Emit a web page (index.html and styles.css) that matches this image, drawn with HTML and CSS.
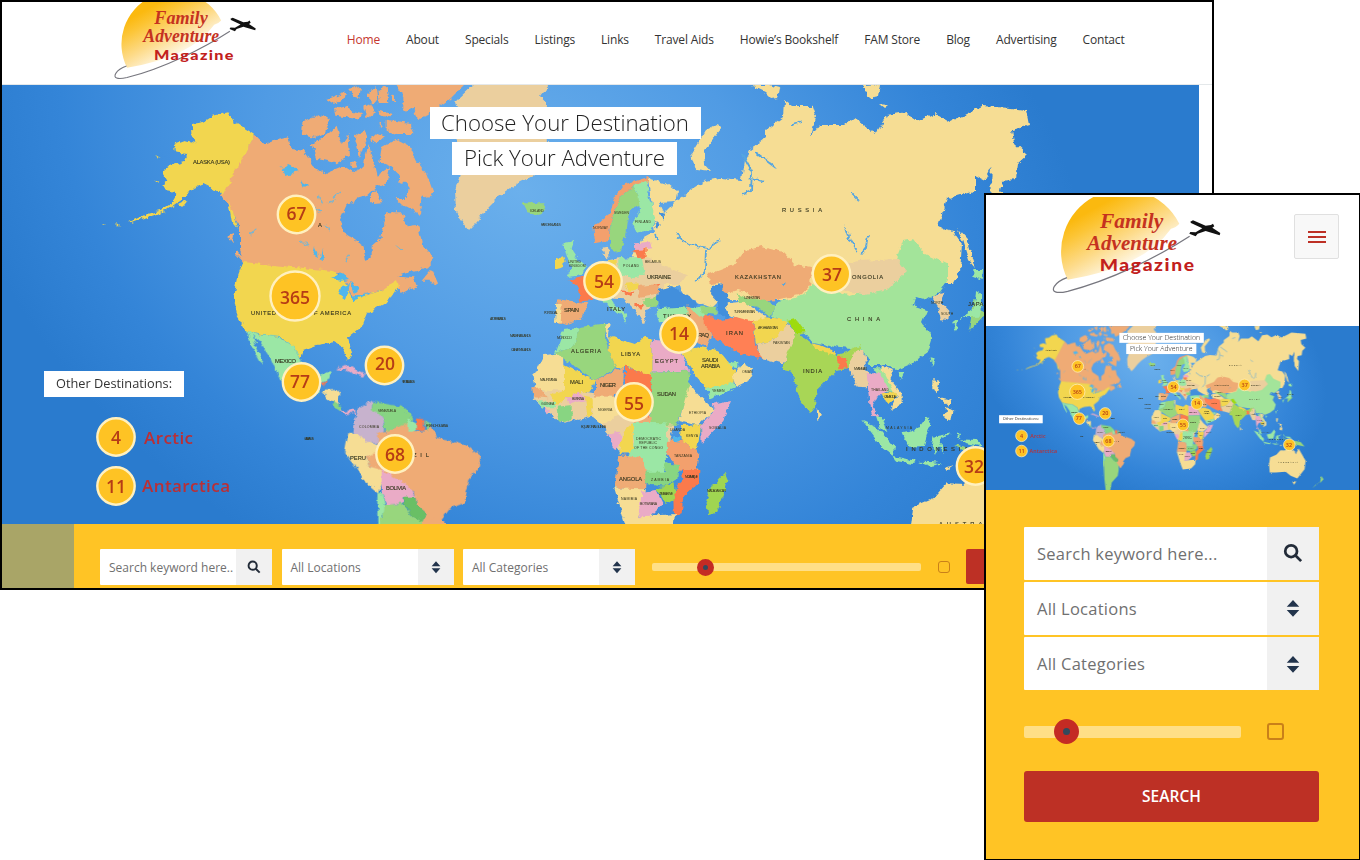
FILE: index.html
```html
<!DOCTYPE html>
<html lang="en">
<head>
<meta charset="utf-8">
<title>Family Adventure Magazine</title>
<link rel="stylesheet" href="styles.css">
</head>
<body>
<main class="stage">
<section class="desktop">
  <header class="top">
    <svg class="logo" viewBox="200 20 510 295">
      <defs>
        <linearGradient id="sunfill" gradientUnits="userSpaceOnUse" x1="320" y1="60" x2="425" y2="250">
          <stop offset="0" stop-color="#fbb90f"/><stop offset=".2" stop-color="#fcc536"/><stop offset=".55" stop-color="#fddb8a"/><stop offset=".85" stop-color="#fef3d8"/><stop offset="1" stop-color="#fff"/>
        </linearGradient>
      </defs>
      <g id="brand">
        <path d="M250 268A187 187 0 0 1 585 100Q575 112 560 115Q480 230 250 268Z" fill="url(#sunfill)"/>
        <path d="M616 138C520 200 380 270 250 303C215 311 200 305 210 288Q220 272 248 262" class="orbit"/>
        <path d="M618 94L626 90 664 106 680 104 686 100 690 108 684 112 708 128 706 135 664 122 640 130 634 138 615 130 618 125 634 126 654 114 620 98Z" fill="#111"/>
        <text class="script" x="347" y="112" textLength="190" lengthAdjust="spacingAndGlyphs">Family</text>
        <text class="script" x="308" y="178" textLength="270" lengthAdjust="spacingAndGlyphs">Adventure</text>
        <text class="block" x="346" y="241" textLength="288" lengthAdjust="spacingAndGlyphs">Magazine</text>
      </g>
    </svg>
    <nav class="nav"><a class="on">Home</a><a>About</a><a>Specials</a><a>Listings</a><a>Links</a><a>Travel Aids</a><a>Howie’s Bookshelf</a><a>FAM Store</a><a>Blog</a><a>Advertising</a><a>Contact</a></nav>
  </header>
  <svg class="map" viewBox="2 85 1197 439" preserveAspectRatio="none">
    <defs>
      <radialGradient id="sea" gradientUnits="userSpaceOnUse" cx="0" cy="0" r="1" gradientTransform="translate(520 190) rotate(25) scale(600 430)">
        <stop offset="0" stop-color="#6bb0ec"/><stop offset=".45" stop-color="#509be4"/><stop offset=".8" stop-color="#3485d8"/><stop offset="1" stop-color="#2a7bce"/>
      </radialGradient>
      <filter id="coast" filterUnits="userSpaceOnUse" x="0" y="80" width="1202" height="540">
        <feTurbulence type="fractalNoise" baseFrequency=".16" numOctaves="3" seed="4" result="n"/>
        <feDisplacementMap in="SourceGraphic" in2="n" scale="6" xChannelSelector="R" yChannelSelector="G"/>
      </filter>
    </defs>
    <g id="world">
      <rect x="0" y="84" width="1200" height="530" fill="url(#sea)"/>
      <g filter="url(#coast)">
        <g class="tan"><path d="M478 80L455 102 462 125 455 150 460 175 455 190 456 212 469 230 477 222 488 208 500 196 520 182 535 175 548 160 546 130 548 105 540 96 552 80Z"/></g>
        <g transform="translate(220 84) scale(.33333)" class="peach">
          <path d="M105 152L135 182 170 168 205 160 215 195 250 200 280 245 310 270 370 245 400 265 430 250 445 180 458 225 470 275 510 250 500 295 465 310 440 335 410 345 380 365 360 410 370 445 430 485 438 530 455 525 455 485 485 460 490 420 500 385 545 385 560 430 595 425 605 475 640 520 625 550 580 560 535 575 580 580 590 605 545 630 530 600 480 620 400 650 370 570 75 540 60 500 60 430 30 370 0 335Z"/>
          <path d="M245 150L250 115 300 90 330 110 318 145 282 162Z"/>
          <path d="M275 182L335 140 350 125 365 180 385 150 390 215 350 238 290 225Z"/>
          <path d="M322 45L370 25 385 30 345 60ZM345 75L385 65 400 85 430 90 410 105 350 95ZM385 15L420 5 415 45 400 35ZM445 20L470 10 475 45 450 60ZM430 70L450 60 465 85 440 100ZM475 20L500 5 505 60 480 60ZM510 40L525 35 525 55ZM405 160L430 140 440 160 420 220ZM450 165L470 145 495 155 470 180ZM475 80L520 90 515 100 480 95ZM390 235L410 232 415 250 395 252ZM478 110L488 125 480 132Z"/>
          <path d="M545 0L735 0 690 45 620 95 590 105 580 75 550 80 550 40 525 0ZM500 110L570 120 580 150 530 150 500 140Z"/>
          <path d="M478 235L485 190 530 165 570 185 590 230 620 270 640 325 625 345 605 330 600 392 555 370 525 345 560 345 570 310 545 280 515 250ZM450 340L465 315 487 355 450 358ZM605 590L635 555 655 600 625 590ZM540 270L555 280 550 300 535 295Z"/>
          <path d="M25 455L40 450 35 475ZM45 500L85 530 78 545 45 510Z"/>
        </g>
        <g transform="translate(0 84) scale(.33333)" class="yellow">
          <path d="M765 152L700 110 685 85 640 95 610 115 575 120 578 160 590 178 555 168 522 180 525 205 562 210 550 235 510 245 487 265 502 290 487 300 500 322 532 328 515 358 480 380 435 392 388 414 392 418 440 400 500 380 550 345 575 315 610 300 640 315 668 332Z"/>
          <path d="M465 212L482 222 472 220ZM462 290L475 292 468 296ZM535 362L560 350 545 368ZM350 418L358 424 345 424ZM300 420L318 422 310 425ZM685 350L705 400 715 435 695 410Z"/>
        </g>
        <path class="yellow" d="M243 262L237 278 233 298 236 314 246 331 262 335 280 337 295 347 300 360 303 350 317 345 335 342 343 347 348 360 352 354 348 337 363 325 368 313 387 302 399 286 397 280 380 291 352 300 345 280 333 271Z"/>
        <path class="lake" d="M332 278L343 273 350 279 340 281ZM342 286L350 284 345 300 339 296ZM350 282L360 288 354 294ZM352 301L366 296 366 294 351 298ZM364 293L372 292 368 295ZM281 168L292 165 298 172 286 176ZM315 245L318 258 313 255ZM322 248L324 260 320 258ZM300 180L308 184 304 188Z"/>
        <path class="wet" d="M325 225L330 230M342 190L332 198M310 205L320 212M300 240L308 246M350 255L345 262M396 245L402 250M250 235L256 228M328 203L336 200M318 195L322 205"/>
        <g transform="translate(220 300) scale(.33333)">
          <path class="mint" d="M80 92L120 105 175 110 225 140 240 180 245 210 300 225 332 212 328 238 305 250 290 290 180 240 165 205 150 170 120 125 98 108 112 145 133 195 118 182 95 140Z"/>
          <path class="cream" d="M305 272L358 270 355 315 330 305Z"/><path class="orange" d="M305 250L320 245 315 262Z"/>
          <path class="green" d="M335 305L360 318 365 335 345 322Z"/>
          <path class="pink" d="M355 325L380 335 402 325 410 345 398 335 375 345ZM348 208L375 195 437 222 432 230 405 222 380 210Z"/>
          <path class="lilac" d="M405 355L415 325 460 300 455 325 490 350 495 390 470 430 440 430 400 400Z"/>
          <path class="green" d="M458 305L490 310 545 320 580 355 570 375 520 385 500 405 490 350 455 330Z"/>
          <path class="peach" d="M475 400L520 385 565 370 570 395 620 390 635 375 650 415 700 425 745 440 782 470 775 505 745 540 730 610 690 625 665 660 665 690 600 690 620 640 590 615 585 580 485 515 450 500 440 470 470 450Z"/>
          <path class="mint" d="M565 355L590 370 588 395 565 395Z"/><path class="orange" d="M588 355L612 358 612 390 588 388Z"/><path class="green" d="M612 360L634 372 620 392Z"/>
          <path class="cream" d="M385 402L420 405 440 425 470 435 470 455 440 470 450 500 485 510 485 550 478 578 430 540 400 490 375 455Z"/>
          <path class="pink" d="M485 510L550 545 590 590 550 590 545 612 500 615 485 580Z"/>
          <path class="grass" d="M490 615L545 612 580 650 615 665 600 710 490 710Z"/>
          <path class="green2" d="M550 590L585 590 590 615 620 640 610 665 580 650 548 610Z"/>
          <path class="mint" d="M475 575L485 580 495 612 480 710 475 700Z"/>
        </g>
        <g transform="translate(-2 64) scale(1.067)">
          <path class="grass" d="M358 425L360 480 365 525 375 525 382 490 400 470 403 452 402 430Z"/><path class="peach" d="M397 430L408 425 420 430 408 448Z"/>
          <path class="cream" d="M855 432L870 415 890 403 912 388 925 393 935 405 944 388 965 425 962 450 940 478 920 470 905 458 875 460 857 460ZM925 487L937 487 930 497ZM930 110L945 125 943 155 932 140Z"/>
          <path class="grass" d="M895 357L950 368 962 382 930 375ZM1012 470L1019 480 1008 492ZM1005 490L985 508 995 497ZM915 220L925 235 910 250Z"/>
        </g>
        <path class="cream" d="M648 178L667 184 677 192 675 202 659 203 664 213 677 200 693 189 705 181 720 178 742 180 745 160 750 150 765 138 765 130 783 117 784 100 792 106 812 106 816 118 811 136 820 125 845 125 855 118 876 134 888 115 905 112 918 121 935 113 950 122 970 112 982 106 1010 108 1027 110 1030 125 1012 130 1014 143 1027 155 1017 164 1015 179 1002 181 998 200 990 200 992 167 985 181 975 176 975 191 947 199 938 227 953 231 962 244 960 271 953 284 945 284 850 300 720 300 712 308 700 303 683 295 680 285 640 300 610 290 630 262 640 240 655 232Z"/>
        <path class="cream" d="M696 170L691 155 706 130 718 124 721 129 704 150 705 165 711 172ZM750 85L768 85 780 88 778 98 772 99 765 92ZM863 86L880 85 878 96 868 98ZM879 104L888 105 884 108ZM958 229L966 238 972 258 975 268 968 260 962 240Z"/>
        <g transform="translate(500 160) scale(.33333)">
          <path class="tan" d="M325 300L355 295 430 290 560 345 540 375 490 370 485 400 440 455 430 492 405 450 370 415 300 410 300 330Z"/>
          <path class="grass" d="M70 130L130 130 138 150 110 165 85 160Z"/>
          <path class="salmon" d="M447 50L370 75 345 110 330 160 280 200 285 247 325 240 332 190 360 110 400 78 447 66Z"/>
          <path class="grass" d="M360 110L400 78 418 110 420 135 390 150 380 190 375 230 358 275 340 280 328 235 332 190Z"/>
          <path class="mint" d="M400 78L445 60 442 100 465 170 455 210 410 218 397 190 420 150 415 105Z"/>
          <path class="pink" d="M405 250L450 245 460 265 405 272Z"/><path class="orange" d="M403 270L440 268 440 290 415 297Z"/>
          <path class="mint" d="M190 250L220 243 215 270 235 300 258 320 245 345 200 352 215 325 200 290Z"/>
          <path class="yellow" d="M165 300L190 288 195 320 165 328ZM325 300L350 300 350 345 325 345ZM370 375L415 370 420 385 385 390Z"/>
          <path class="tan" d="M305 265L325 260 325 295 310 290Z"/>
          <path class="mint" d="M355 295L425 290 435 345 400 352 355 340Z"/>
          <path class="orange" d="M205 360L250 350 310 380 275 420 237 425 235 385ZM360 390L400 395 390 412ZM405 432L435 432 420 450ZM455 365L482 370 470 390Z"/>
          <path class="peach" d="M172 418L265 430 240 480 200 495 172 485ZM415 378L470 372 480 400 420 410Z"/><path class="cream" d="M168 435L185 435 182 487 165 485Z"/>
          <path class="mint" d="M295 405L330 412 345 435 382 468 375 488 362 465 315 430ZM470 448L530 435 615 445 610 480 480 490Z"/>
          <path class="grass" d="M430 415L475 412 470 440 435 440ZM600 440L650 440 650 465 605 460Z"/>
          <path class="tan" d="M430 345L470 320 560 345 540 372 480 372 430 365Z"/>
        </g>
        <path class="seafill" d="M658 290L672 286 678 291 684 294 698 304 695 308 676 307 660 308 657 300ZM712 286L722 284 728 296 730 314 727 320 718 312 718 302 711 294ZM660 212L665 214 664 220ZM655 222L660 224 658 229Z"/>
        <path class="peach" d="M707 275L733 265 745 250 762 247 783 252 795 265 812 268 810 285 803 294 775 300 766 302 745 292 738 290 726 294 720 283 710 284Z"/>
        <g transform="translate(700 290) scale(.33333)">
          <path class="grass" d="M110 10L140 25 200 30 230 50 210 80 170 50 120 40Z"/>
          <path class="cream" d="M80 40L130 35 200 80 165 105 105 80 85 75Z"/>
          <path class="peach" d="M-40 45L15 90 35 140 20 170 -30 150Z"/>
          <path class="iran" d="M10 72L60 92 105 80 160 95 165 165 187 205 130 195 80 170 45 145 12 110Z"/>
          <path class="yellow" d="M160 95L195 82 265 88 250 130 220 150 168 165Z"/>
          <path class="tan" d="M168 165L220 150 265 100 290 130 265 190 250 222 200 208 185 205Z"/>
        </g>
        <path class="mint2" d="M772 316L778 302 805 295 812 283 850 296 870 290 890 275 903 241 913 239 925 254 947 264 947 281 940 291 927 300 917 297 912 305 927 310 922 322 932 337 927 353 913 363 897 370 887 365 870 365 863 350 840 348 813 343 800 327Z"/>
        <path class="tan" d="M845 264L858 261 897 259 907 271 887 290 866 295 843 290 835 275Z"/>
        <g transform="translate(700 290) scale(.33333)">
          <path class="india" d="M265 95L290 85 318 130 300 135 345 170 410 195 440 185 480 165 470 200 440 235 410 240 350 300 345 350 330 370 300 330 275 245 248 240 262 190 290 130Z"/>
          <path class="lime" d="M262 90L285 84 318 125 290 130Z"/><path class="yellow" d="M335 160L360 165 408 185 405 195 345 178Z"/><path class="orange" d="M410 200L438 200 440 235 415 235Z"/><path class="cream" d="M350 352L368 378 352 390Z"/>
          <path class="tan" d="M470 180L492 180 500 240 515 250 500 292 470 290 443 230ZM700 15L735 8 722 35 748 62 745 90 722 88 715 50 700 30Z"/>
          <path class="mint2" d="M520 235L545 235 575 275 590 305 565 305Z"/>
          <path class="pink" d="M500 250L540 250 568 300 528 322 515 350 540 385 520 375 508 340Z"/>
          <path class="cream" d="M540 225L582 240 568 265 605 310 605 340 572 360 590 318 565 275Z"/><path class="yellow" d="M545 310L588 305 580 335 555 335Z"/>
          <path class="mint" d="M528 378L550 388 562 428 540 415ZM484 390L530 410 582 470 578 498 540 465ZM578 498L645 512 640 522 585 512ZM655 515L690 516 730 520 690 528ZM608 430L650 420 680 380 692 395 680 440 672 468 625 470ZM700 440L752 430 718 450 735 490 715 470 705 495 695 470ZM770 430L780 435 775 450ZM780 448L830 450 850 470 800 460ZM692 202L704 205 696 232ZM595 245L612 250 602 270Z"/>
          <path class="cream" d="M700 270L718 275 710 310 700 300ZM740 355L760 365 755 390 730 380ZM715 320L755 330 745 350ZM735 535L765 525 740 543ZM632 715L640 650 700 625 740 580 880 585 900 715Z"/>
          <path class="mint" d="M828 0L842 8 848 45 838 80 790 82 775 90 768 125 760 100 800 70 825 50ZM820 -60L852 -60 848 -30 820 -40Z"/>
        </g>
        <g transform="translate(500 320) scale(.33333)">
          <path class="tan" d="M100 210L195 205 345 230 450 290 520 315 500 400 360 400 325 340 300 308 280 290 180 310 120 255 98 235Z"/>
          <path class="yellow" d="M540 95L600 80 660 95 705 150 700 190 620 208 590 170Z"/>
          <path class="mint" d="M618 207L700 187 706 205 630 235ZM680 130L715 125 715 142 690 138Z"/><path class="cream" d="M698 165L730 128 762 148 745 180 706 200Z"/>
          <path class="mint" d="M165 100L190 30 235 25 228 70 205 85Z"/>
          <path class="cream" d="M98 172L130 105 192 100 195 212 105 208ZM310 10L332 10 325 60Z"/>
          <path class="grass" d="M205 85L228 68 235 22 320 10 315 50 325 90 350 145 285 180 165 100Z"/>
          <path class="yellow" d="M328 48L405 72 430 50 455 60 455 168 380 140 350 145 325 90ZM192 135L285 180 275 210 210 230 170 258 150 225 192 212ZM255 230L280 235 275 290 262 290Z"/>
          <path class="pink" d="M455 62L530 68 540 95 568 152 455 155ZM200 235L235 215 260 240 210 250ZM130 265L150 270 145 285Z"/>
          <path class="peach" d="M285 180L372 140 370 190 345 230 285 230ZM97 205L125 202 145 235 100 232ZM385 290L450 285 472 308 400 310Z"/>
          <path class="mint" d="M110 240L170 245 165 262 125 262Z"/><path class="green" d="M170 260L215 255 215 300 175 308Z"/>
          <path class="orange" d="M375 140L455 165 450 290 375 290Z"/>
          <path class="grass" d="M453 155L566 153 570 200 530 318 455 312Z"/>
          <path class="cream" d="M568 190L600 230 645 270 592 315 538 300ZM278 230L345 230 360 285 305 312 280 292Z"/>
          <path class="pink" d="M635 255L693 243 670 300 605 372 603 318 645 270ZM322 342L355 335 370 365 345 388Z"/>
          <path class="yellow" d="M543 315L605 313 590 392 545 360ZM372 335L397 312 400 400 355 400Z"/>
          <path class="mint" d="M395 308L500 310 502 380 500 430 490 458 435 455 430 420 385 410 402 370Z"/>
          <path class="salmon" d="M500 362L550 362 598 400 592 450 535 452 502 400Z"/><path class="lake" d="M520 348L543 350 538 368 522 365Z"/>
          <path class="peach" d="M358 405L430 415 440 455 435 510 343 505Z"/>
          <path class="green" d="M437 455L495 455 492 430 540 435 535 475 490 500 435 492Z"/>
          <path class="orange" d="M545 450L598 450 597 488 550 530 545 580 522 588 520 540 530 500 550 480Z"/>
          <path class="lime2" d="M472 508L520 488 528 535 500 552Z"/>
          <path class="cream" d="M343 505L438 508 415 590 525 582 520 625 480 665 400 675 375 610Z"/>
          <path class="pink" d="M425 515L470 510 490 552 450 590 415 592Z"/>
          <path class="lime2" d="M675 458L685 482 652 575 625 582 617 550 628 510Z"/>
        </g>
        <path class="waterline" d="M742 154L752 172 751 190 742 194M753 178L764 182M754 152L768 162 776 168M792 125L802 122M868 235L866 248 861 254M845 225L850 240 858 252M676 235L690 245 708 248 720 240M706 250L705 270 696 282M655 235L657 240M783 285L786 282M852 194L858 200"/>
      </g>
      <g class="places">
        <text x="193" y="164" textLength="37">ALASKA (USA)</text><text x="318" y="227">A</text>
        <text x="251" y="315" textLength="25">UNITED</text><text x="314" y="315" textLength="37">F AMERICA</text>
        <text x="275" y="363" textLength="21">MEXICO</text>
        <text x="359" y="428" class="xs" textLength="20">COLOMBIA</text><text x="378" y="412" class="xs" textLength="18">VENEZUELA</text>
        <text x="350" y="460" textLength="16">PERU</text><text x="413" y="457" textLength="16">Z I L</text><text x="386" y="490" textLength="20">BOLIVIA</text>
        <text x="530" y="212" class="xs" textLength="14">ICELAND</text><text x="614" y="214" class="xs" textLength="15">SWEDEN</text><text x="635" y="223" class="xs" textLength="16">FINLAND</text><text x="593" y="229" class="xs" textLength="15">NORWAY</text>
        <text x="623" y="267" class="xs" textLength="16">POLAND</text><text x="645" y="263" class="xs" textLength="16">BELARUS</text><text x="647" y="279" textLength="24">UKRAINE</text>
        <text x="568" y="263" class="xs">UNITED</text><text x="569" y="267" class="xs">KINGDOM</text><text x="564" y="312" textLength="15">SPAIN</text><text x="607" y="311" textLength="18">ITALY</text><text x="663" y="318" textLength="28">TURKEY</text>
        <text x="782" y="212" textLength="40">RUSSIA</text><text x="735" y="279" textLength="46">KAZAKHSTAN</text><text x="852" y="279" textLength="31">ONGOLIA</text><text x="847" y="321" textLength="33">CHINA</text>
        <text x="571" y="353" textLength="30">ALGERIA</text><text x="621" y="356" textLength="19">LIBYA</text><text x="655" y="363" textLength="23">EGYPT</text><text x="570" y="384" textLength="13">MALI</text><text x="600" y="387" textLength="16">NIGER</text><text x="657" y="396" textLength="19">SUDAN</text>
        <text x="540" y="381" class="xs" textLength="17">MAURITANIA</text><text x="557" y="339" class="xs" textLength="15">MOROCCO</text><text x="541" y="405" class="xs">GUINEA</text><text x="572" y="400" class="xs" textLength="12">BURKINA</text><text x="598" y="411" class="xs">NIGERIA</text>
        <text x="689" y="414" class="xs" textLength="17">ETHIOPIA</text><text x="709" y="429" class="xs" textLength="17">SOMALIA</text><text x="686" y="437" class="xs" textLength="12">KENYA</text><text x="674" y="457" class="xs" textLength="18">TANZANIA</text><text x="670" y="431" class="xs">UGANDA</text>
        <text x="636" y="440" class="xs" textLength="25">DEMOCRATIC</text><text x="639" y="444" class="xs" textLength="18">REPUBLIC</text><text x="634" y="449" class="xs" textLength="29">OF THE CONGO</text>
        <text x="619" y="481" textLength="23">ANGOLA</text><text x="651" y="481" class="xs" textLength="18">ZAMBIA</text><text x="621" y="500" class="xs" textLength="16">NAMIBIA</text><text x="640" y="505" class="xs" textLength="17">BOTSWANA</text><text x="659" y="495" class="xs" textLength="14">ZIMBABWE</text><text x="707" y="492" class="xs" textLength="19">MADAGASCAR</text><text x="685" y="478" class="xs" textLength="13">MOZAMBIQUE</text>
        <text x="697" y="337" textLength="12">IRAQ</text><text x="726" y="335" textLength="17">IRAN</text><text x="702" y="362" textLength="16">SAUDI</text><text x="701" y="368" textLength="19">ARABIA</text><text x="712" y="392" class="xs">YEMEN</text><text x="742" y="373" class="xs">OMAN</text>
        <text x="758" y="329" class="xs" textLength="20">AFGHANISTAN</text><text x="773" y="344" class="xs">PAKISTAN</text><text x="734" y="313" class="xs" textLength="21">TURKMENISTAN</text><text x="744" y="299" class="xs" textLength="16">UZBEKISTAN</text><text x="803" y="373" textLength="19">INDIA</text><text x="854" y="370" class="xs" textLength="13">MYANMAR</text><text x="871" y="391" class="xs" textLength="18">THAILAND</text><text x="884" y="398" class="xs" textLength="12">CAMBODIA</text>
        <text x="886" y="429" class="xs" textLength="26">MALAYSIA</text><text x="906" y="451" textLength="62">INDONESIA</text><text x="968" y="306" textLength="20">JAPAN</text><text x="939" y="526" textLength="64">AUSTRALIA</text><text x="931" y="304" class="xs">NORTH</text><text x="941" y="315" class="xs">SOUTH</text>
        <text x="541" y="226" class="xs" textLength="20">FAROE ISLANDS</text><text x="544" y="314" class="xs" textLength="14">PORTUGAL</text><text x="510" y="337" class="xs" textLength="21">MADEIRA ISLANDS</text><text x="511" y="351" class="xs" textLength="20">CANARY ISLANDS</text><text x="581" y="428" class="xs" textLength="25">EQUATORIAL GUINEA</text><text x="490" y="320" class="xs" textLength="16">AZORES ISLANDS</text><text x="426" y="427" class="xs" textLength="22">FRENCH GUIANA</text><text x="402" y="383" class="xs" textLength="13">VIRGIN ISLANDS</text><text x="304" y="440" class="xs" textLength="10">GALAPAGOS</text>
      </g>
      <g class="banners"><rect x="430" y="107" width="271" height="32"/><rect x="452" y="142" width="225" height="33"/><rect x="44" y="371" width="140" height="26"/></g>
      <text class="title" x="441" y="131" textLength="248" lengthAdjust="spacingAndGlyphs">Choose Your Destination</text>
      <text class="title" x="464" y="166" textLength="201" lengthAdjust="spacingAndGlyphs">Pick Your Adventure</text>
      <text class="other" x="56" y="388" textLength="116" lengthAdjust="spacingAndGlyphs">Other Destinations:</text>
      <g class="pins">
        <circle cx="296.500" cy="214.500" r="18.700"/><circle cx="295" cy="296" r="24.500"/><circle cx="301.500" cy="382" r="18.700"/><circle cx="384.500" cy="365.500" r="18.700"/><circle cx="603" cy="281" r="18.700"/><circle cx="679" cy="334" r="18.700"/><circle cx="634" cy="402" r="18.700"/><circle cx="395" cy="454" r="18.700"/><circle cx="831.500" cy="274" r="18.700"/><circle cx="975.500" cy="466" r="18.700"/><circle cx="116" cy="437" r="18.700"/><circle cx="116" cy="486" r="18.700"/>
      </g>
      <g class="counts">
        <text x="296.500" y="220">67</text><text x="295" y="304">365</text><text x="300" y="388">77</text><text x="385" y="370">20</text><text x="604" y="288">54</text><text x="679" y="340">14</text><text x="634" y="410">55</text><text x="395" y="461">68</text><text x="832" y="281">37</text><text x="974" y="473">32</text><text x="116" y="444">4</text><text x="116" y="493">11</text>
      </g>
      <g class="regions"><text x="144" y="444" textLength="49">Arctic</text><text x="142" y="492" textLength="88">Antarctica</text></g>
    </g>
  </svg>
  <div class="bar">
    <div class="olive"></div>
    <div class="field"><span>Search keyword here..</span><i><svg viewBox="0 0 16 16"><circle cx="6.500" cy="6.500" r="4.700"/><path d="M10 10L14.500 14.500"/></svg></i></div>
    <div class="field"><span>All Locations</span><i><svg class="sort" viewBox="0 0 16 16"><path d="M3 7L8 1.500 13 7ZM3 9.500H13L8 15Z"/></svg></i></div>
    <div class="field"><span>All Categories</span><i><svg class="sort" viewBox="0 0 16 16"><path d="M3 7L8 1.500 13 7ZM3 9.500H13L8 15Z"/></svg></i></div>
    <div class="track"><b></b></div>
    <div class="check"></div>
    <div class="go"></div>
  </div>
</section>
<section class="phone">
  <header class="mtop">
    <svg class="mlogo" viewBox="200 20 510 295"><use href="#brand"/></svg>
    <div class="burger"><span></span><span></span><span></span></div>
  </header>
  <svg class="mmap" viewBox="2 85 1197 526" preserveAspectRatio="none"><use href="#world"/></svg>
  <div class="mform">
    <div class="field"><span>Search keyword here...</span><i><svg viewBox="0 0 16 16"><circle cx="6.500" cy="6.500" r="4.700"/><path d="M10 10L14.500 14.500"/></svg></i></div>
    <div class="field"><span>All Locations</span><i><svg class="sort" viewBox="0 0 16 16"><path d="M3 7L8 1.500 13 7ZM3 9.500H13L8 15Z"/></svg></i></div>
    <div class="field"><span>All Categories</span><i><svg class="sort" viewBox="0 0 16 16"><path d="M3 7L8 1.500 13 7ZM3 9.500H13L8 15Z"/></svg></i></div>
    <div class="mrange"><div class="track"><b></b></div><div class="check"></div></div>
    <div class="mgo">SEARCH</div>
  </div>
</section>
</main>
</body>
</html>
```
FILE: styles.css
```css
*{box-sizing:border-box}
body{margin:0;background:#fff;font-family:"Open Sans",sans-serif}
.stage{position:relative;width:1360px;height:860px;overflow:hidden}
svg{display:block}
.desktop{position:absolute;left:0;top:0;width:1214px;height:590px;border:2px solid #000;background:#fff;overflow:hidden}
.top{height:83px;display:flex;align-items:flex-start;overflow:hidden;border-bottom:1px solid #e4e8ea}
.logo{width:143.300px;height:83px;margin:-4.500px 0 0 110.500px;flex:none}
.orbit{fill:none;stroke:#77777f;stroke-width:3.800}
.script{font:italic 600 64px "Liberation Serif",serif;fill:#c5321f}
.block{font:900 48px Lato,sans-serif;fill:#c2201c;letter-spacing:4px}
.nav{display:flex;gap:26px;margin:29px 0 0 91px;white-space:nowrap;font-size:12px;line-height:17px;letter-spacing:-.17px;color:#333}
.nav .on{color:#c5372f}
.map{width:1197px;height:439px}
.tan{fill:#ebcf9e}
.peach{fill:#efab75}.yellow{fill:#f2d64f}.mint{fill:#9be7a5}.mint2{fill:#a3e49a}.green{fill:#88d582}.green2{fill:#69bf65}.grass{fill:#98d67d}
.cream{fill:#f6dd94}.pink{fill:#eaabc6}.lilac{fill:#c7b2cd}.orange{fill:#fb7a4c}.salmon{fill:#f3a06d}.iran{fill:#ff8054}.india{fill:#a8d657}.lime{fill:#9edb10}.lime2{fill:#a0d551}
.lake{fill:#4fb6ec}.seafill{fill:#438fdc}
.wet{fill:none;stroke:#7fb5cc;stroke-width:1.500}
.waterline{fill:none;stroke:#55a5e0;stroke-width:1.800}
.places{font:500 5.800px "Liberation Sans",sans-serif;fill:#35351f;stroke:#35351f;stroke-width:.12}
.places .xs{font-size:3.500px;stroke:none}
.banners{fill:#fff}
.title{font:300 22.500px "Open Sans",sans-serif;fill:#222}
.other{font:400 12.500px "Open Sans",sans-serif;fill:#333}
.pins{fill:#fec324;stroke:#fff0bf;stroke-width:2.400}
.counts{font:600 17.500px "Open Sans",sans-serif;fill:#b63c16;text-anchor:middle}
.regions{font:600 17px "Open Sans",sans-serif;fill:#bb2f35}
.bar{height:64px;background:#ffc425;width:1197px;display:flex;align-items:flex-start;padding-top:25px}
.olive{width:72px;height:64px;margin:-25px 26px 0 0;background:#a9a567}
.field{display:flex;background:#fff;color:#707070;border-radius:1px}
.field span{flex:1;white-space:nowrap}
.field i{background:#f1f1f1;display:flex;align-items:center;justify-content:center}
.field svg{fill:none;stroke:#222b38;stroke-width:2.200}
.field .sort{fill:#22344c;stroke:none}
.bar .field{width:172px;height:36px;margin-right:9.500px;font-size:12px;line-height:37px}
.bar .field span{padding-left:9px}
.bar .field i{width:36px}
.bar .field svg{width:14px;height:14px}
.bar .field:nth-child(4){margin-right:17px}
.track{background:#ffdf87;border-radius:2px;display:flex;align-items:center}
.track b{border-radius:50%;background:#33495c;border:solid #c42b24}
.bar .track{width:269px;height:8px;margin:14px 17px 0 0}
.bar .track b{width:17px;height:17px;border-width:6.500px;margin-left:44.500px}
.check{border:2px solid #c98019;border-radius:3px}
.bar .check{width:12px;height:12px;margin:12px 16px 0 0;border-width:1.500px}
.go{width:100px;height:35px;background:#bd3025;border-radius:2px}
.phone{position:absolute;left:984px;top:193px;width:376px;height:667px;border:2px solid #000;border-right-width:1px;border-bottom-width:1px;background:#ffc425;overflow:hidden}
.mtop{height:131px;background:#fff;display:flex;justify-content:space-between;padding-right:20px}
.mlogo{width:170px;height:98.300px;margin:2px 0 0 65px}
.burger{width:45px;height:45px;margin-top:19px;border:1.500px solid #e0e0e0;border-radius:2px;background:#f8f8f8;display:flex;flex-direction:column;align-items:center;justify-content:center;gap:3px}
.burger span{width:18px;height:2px;background:#bd3025}
.mmap{width:373px;height:164px}
.mform{padding:37px 40px 0 38px}
.mform .field{height:52.500px;margin-bottom:2.700px;font-size:16.500px;line-height:53px;letter-spacing:.25px}
.mform .field span{padding-left:13px}
.mform .field i{width:52px}
.mform .field svg{width:20px;height:20px}
.mrange{display:flex;height:26px;align-items:center;margin:29px 0 26px}
.mrange .track{width:217px;height:12px}
.mrange .track b{width:25px;height:25px;border-width:9.500px;margin-left:30px}
.mrange .check{width:17px;height:17px;margin-left:26px}
.mgo{height:51px;background:#bd3025;border-radius:3px;color:#fff;font-weight:600;font-size:15.500px;line-height:51px;text-align:center}
```
